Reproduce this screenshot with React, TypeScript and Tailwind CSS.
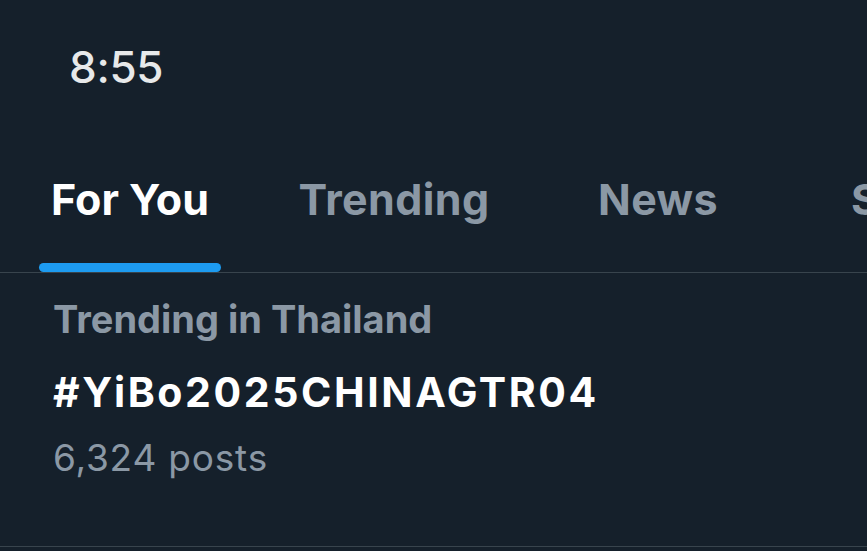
import React from "react";

const font = { fontFamily: '"Inter", "Roboto", "Liberation Sans", sans-serif' };

export default function App() {
  const tabs = ["For You", "Trending", "News", "Sports"];
  return (
    <div className="w-[867px] h-[551px] bg-[#15202b] overflow-hidden flex flex-col" style={font}>
      <div className="h-[134px] pl-[69px] pt-[39px]">
        <span className="text-[#e7e9ea] text-[44px] leading-[56px] font-medium tracking-[-0.3px]">8:55</span>
      </div>
      <div className="flex flex-col border-b border-[#38444d]">
        <div className="flex h-[138px] -ml-[2px]">
          {tabs.map((t, i) => (
            <div key={t} className="w-[264px] shrink-0 flex flex-col items-center justify-end">
              <span
                className={`text-[43px] font-bold leading-[50px] whitespace-nowrap ${
                  i === 0 ? "text-white" : "text-[#8b98a5] tracking-[0.4px]"
                }`}
              >
                {t}
              </span>
              <div className={`mt-[39px] h-[9px] w-[182px] rounded-full ${i === 0 ? "bg-[#1d9bf0]" : "bg-transparent"}`} />
            </div>
          ))}
        </div>
      </div>
      <div className="flex flex-col pl-[53px] pt-[22px] border-b border-[#38444d] h-[274px]">
        <span className="text-[#8b98a5] text-[38px] font-bold leading-[48px]">Trending in Thailand</span>
        <span className="text-white text-[41px] font-bold leading-[50px] mt-[24px] tracking-[2.6px]">#YiBo2025CHINAGTR04</span>
        <span className="text-[#8b98a5] text-[37px] font-normal leading-[46px] mt-[18px] tracking-[0.8px]">6,324 posts</span>
      </div>
    </div>
  );
}
